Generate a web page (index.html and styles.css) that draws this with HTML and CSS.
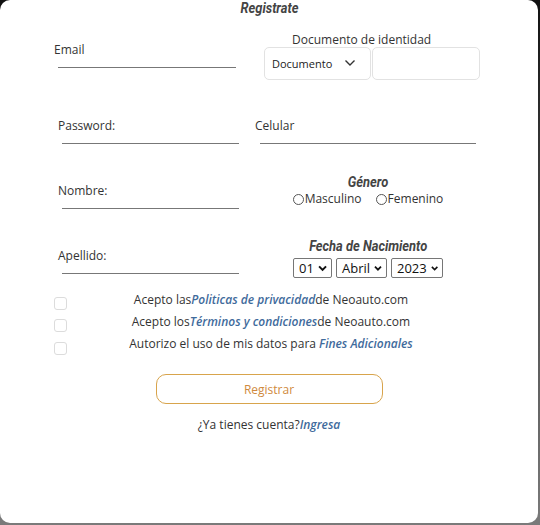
FILE: index.html
```html
<!DOCTYPE html>
<html lang="es">
<head>
<meta charset="utf-8">
<title>Registrate</title>
<link rel="stylesheet" href="styles.css">
</head>
<body>
<div class="modal">
  <h2 class="title"><span class="narrow">Registrate</span></h2>
  <div class="grid">
    <div class="cell cell-r1">
      <label class="lbl">Email</label>
      <div class="line line-email"></div>
    </div>
    <div class="cell doc">
      <div class="doc-title">Documento de identidad</div>
      <div class="doc-boxes">
        <div class="doc-select">
          <span>Documento</span>
          <svg width="12" height="8" viewBox="0 0 12 8"><path d="M1.5 1.5 L6 6 L10.5 1.5" fill="none" stroke="#333" stroke-width="1.4"/></svg>
        </div>
        <div class="doc-input"></div>
      </div>
    </div>

    <div class="cell cell-r2">
      <label class="lbl lbl-in">Password:</label>
      <div class="line line-left"></div>
    </div>
    <div class="cell cell-r2 right">
      <label class="lbl">Celular</label>
      <div class="line line-cel"></div>
    </div>

    <div class="cell cell-r3">
      <label class="lbl lbl-in">Nombre:</label>
      <div class="line line-left"></div>
    </div>
    <div class="cell cell-r3r right center-block">
      <div class="sub-title"><span class="narrow">Género</span></div>
      <div class="radios">
        <span class="radio"><span class="circle"></span>Masculino</span>
        <span class="radio"><span class="circle"></span>Femenino</span>
      </div>
    </div>

    <div class="cell cell-r4">
      <label class="lbl lbl-in">Apellido:</label>
      <div class="line line-left"></div>
    </div>
    <div class="cell cell-r4r right center-block">
      <div class="sub-title"><span class="narrow">Fecha de Nacimiento</span></div>
      <div class="dates">
        <span class="dsel d-day">01<svg width="10" height="7" viewBox="0 0 10 7"><path d="M1.2 1.2 L5 5 L8.8 1.2" fill="none" stroke="#111" stroke-width="2.2"/></svg></span>
        <span class="dsel d-month">Abril<svg width="10" height="7" viewBox="0 0 10 7"><path d="M1.2 1.2 L5 5 L8.8 1.2" fill="none" stroke="#111" stroke-width="2.2"/></svg></span>
        <span class="dsel d-year">2023<svg width="10" height="7" viewBox="0 0 10 7"><path d="M1.2 1.2 L5 5 L8.8 1.2" fill="none" stroke="#111" stroke-width="2.2"/></svg></span>
      </div>
    </div>
  </div>

  <div class="checks">
    <div class="check-row">
      <span class="box"></span>
      <span class="check-text">Acepto las<a class="link">Politicas de privacidad</a>de Neoauto.com</span>
    </div>
    <div class="check-row">
      <span class="box"></span>
      <span class="check-text">Acepto los<a class="link">Términos y condiciones</a>de Neoauto.com</span>
    </div>
    <div class="check-row">
      <span class="box box-last"></span>
      <span class="check-text">Autorizo el uso de mis datos para <a class="link">Fines Adicionales</a></span>
    </div>
  </div>

  <div class="actions">
    <button class="btn">Registrar</button>
    <p class="login">¿Ya tienes cuenta?<a class="link">Ingresa</a></p>
  </div>
</div>
</body>
</html>
```

FILE: styles.css
```css
* { box-sizing: border-box; }

html, body {
  margin: 0;
  padding: 0;
}

body {
  width: 540px;
  height: 525px;
  overflow: hidden;
  background: linear-gradient(to bottom, #111 0%, #444 40%, #7a7a7a 100%);
  font-family: "Open Sans", "Liberation Sans", sans-serif;
  font-size: 12px;
  color: #333;
}

.modal {
  width: 538px;
  height: 523px;
  background: #fff;
  border-radius: 10px;
  overflow: hidden;
}

.narrow {
  display: inline-block;
  transform: scaleX(0.92);
}

.title {
  margin: 0 0 14px;
  height: 16px;
  line-height: 16px;
  text-align: center;
  font-family: "Roboto", "Liberation Sans", sans-serif;
  font-style: italic;
  font-weight: bold;
  font-size: 14px;
  color: #444;
}

.grid {
  display: grid;
  grid-template-columns: 201px 283px;
  padding-left: 54px;
  align-items: start;
}

.cell {
  display: flex;
  flex-direction: column;
  align-items: flex-start;
}

.lbl {
  display: block;
  line-height: 16px;
  height: 16px;
  font-size: 12px;
  color: #333;
}

.lbl-in { margin-left: 4px; }

.line {
  height: 10px;
  border-bottom: 1px solid #777;
}

.line-email { width: 178px; margin-left: 4px; }
.line-left { width: 177px; margin-left: 8px; }
.line-cel { width: 216px; margin-left: 5px; }

.cell-r1 { padding-top: 12px; }
.cell-r2 { padding-top: 38px; }
.cell-r3 { padding-top: 39px; }
.cell-r4 { padding-top: 39px; }
.cell-r3r { padding-top: 30px; }
.cell-r4r { padding-top: 29px; }

.doc { padding-top: 2px; }

.doc-title {
  line-height: 15px;
  height: 15px;
  margin-left: 37px;
  font-size: 12px;
  color: #333;
}

.doc-boxes {
  display: flex;
  gap: 1px;
  margin-left: 9px;
}

.doc-select,
.doc-input {
  height: 33px;
  border: 1px solid #e2e2e2;
  border-radius: 5px;
  background: #fff;
}

.doc-select {
  width: 107px;
  display: flex;
  align-items: center;
  justify-content: space-between;
  padding: 0 14px 1px 7px;
  font-size: 11px;
  color: #222;
}

.doc-input { width: 108px; }

.center-block {
  width: 226px;
  align-items: center;
}

.sub-title {
  line-height: 16px;
  height: 16px;
  font-family: "Roboto", "Liberation Sans", sans-serif;
  font-style: italic;
  font-weight: bold;
  font-size: 14px;
  color: #444;
}

.radios {
  display: flex;
  gap: 14px;
  margin-top: 1px;
  line-height: 16px;
  font-size: 12px;
  color: #333;
}

.radio {
  display: flex;
  align-items: center;
  gap: 1px;
}

.circle {
  width: 11px;
  height: 11px;
  border: 1px solid #555;
  border-radius: 50%;
}

.dates {
  display: flex;
  gap: 4px;
  margin-top: 4px;
}

.dsel {
  height: 20px;
  border: 1px solid #767676;
  border-radius: 2px;
  display: flex;
  align-items: center;
  gap: 4px;
  padding: 0 4px 0 5px;
  font-size: 13px;
  color: #111;
}

.d-day { width: 39px; }
.d-month { width: 51px; }
.d-year { width: 52px; }

.checks {
  margin-top: 11px;
  padding: 0 63px 0 54px;
}

.check-row {
  display: grid;
  grid-template-columns: 13px 1fr;
  height: 22px;
  line-height: 22px;
}

.box {
  width: 13px;
  height: 13px;
  margin-top: 8px;
  border: 1px solid #dcdcdc;
  border-radius: 3px;
}

.box-last { margin-top: 9px; }

.check-text {
  text-align: center;
  font-size: 12px;
  color: #333;
}

.link {
  color: #3f6b9c;
  font-style: italic;
  font-weight: 600;
}

.actions {
  display: flex;
  flex-direction: column;
  align-items: center;
  margin-top: 19px;
}

.btn {
  width: 227px;
  height: 30px;
  border: 1px solid #d8a44c;
  border-radius: 10px;
  background: #fff;
  font-family: "Open Sans", "Liberation Sans", sans-serif;
  font-size: 12px;
  color: #d08a3e;
  padding: 0;
}

.login {
  margin: 13px 0 0;
  line-height: 16px;
  font-size: 12px;
  color: #333;
}
```
